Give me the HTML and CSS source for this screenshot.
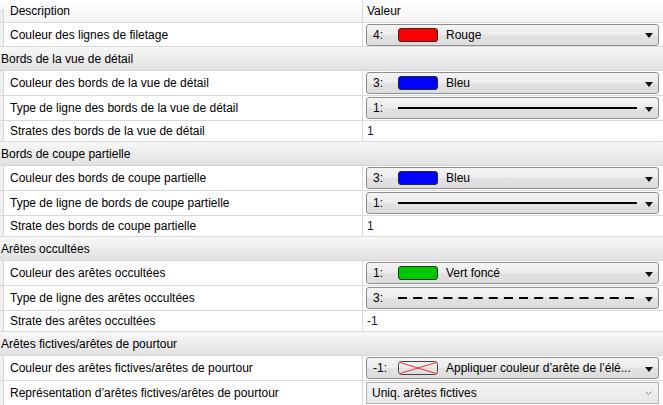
FILE: index.html
```html
<!DOCTYPE html>
<html lang="fr">
<head>
<meta charset="utf-8">
<title>Propriétés</title>
<link rel="stylesheet" href="styles.css">
</head>
<body>
<div class="grid">
  <div class="row hdr"><div class="gut"></div><div class="c1">Description</div><div class="c2 hv">Valeur</div></div>

  <div class="row first"><div class="gut"></div><div class="c1">Couleur des lignes de filetage</div>
    <div class="c2"><div class="combo"><span class="num">4:</span><span class="sw red"></span><span class="lbl">Rouge</span><span class="arr"></span></div></div></div>

  <div class="group">Bords de la vue de détail</div>
  <div class="row d"><div class="gut"></div><div class="c1">Couleur des bords de la vue de détail</div>
    <div class="c2"><div class="combo"><span class="num">3:</span><span class="sw blue"></span><span class="lbl">Bleu</span><span class="arr"></span></div></div></div>
  <div class="row d"><div class="gut"></div><div class="c1">Type de ligne des bords de la vue de détail</div>
    <div class="c2"><div class="combo"><span class="num">1:</span><span class="line solid"></span><span class="arr"></span></div></div></div>
  <div class="row t"><div class="gut"></div><div class="c1">Strates des bords de la vue de détail</div><div class="c2 tv">1</div></div>

  <div class="group">Bords de coupe partielle</div>
  <div class="row d"><div class="gut"></div><div class="c1">Couleur des bords de coupe partielle</div>
    <div class="c2"><div class="combo"><span class="num">3:</span><span class="sw blue"></span><span class="lbl">Bleu</span><span class="arr"></span></div></div></div>
  <div class="row d"><div class="gut"></div><div class="c1">Type de ligne de bords de coupe partielle</div>
    <div class="c2"><div class="combo"><span class="num">1:</span><span class="line solid"></span><span class="arr"></span></div></div></div>
  <div class="row t"><div class="gut"></div><div class="c1">Strate des bords de coupe partielle</div><div class="c2 tv">1</div></div>

  <div class="group">Arêtes occultées</div>
  <div class="row d"><div class="gut"></div><div class="c1">Couleur des arêtes occultées</div>
    <div class="c2"><div class="combo"><span class="num">1:</span><span class="sw green"></span><span class="lbl">Vert foncé</span><span class="arr"></span></div></div></div>
  <div class="row d"><div class="gut"></div><div class="c1">Type de ligne des arêtes occultées</div>
    <div class="c2"><div class="combo"><span class="num">3:</span>
      <svg class="dash" width="236" height="4" viewBox="0 0 236 4"><line x1="0" y1="2" x2="236" y2="2" stroke="#000" stroke-width="2" stroke-dasharray="9 6.13"/></svg>
      <span class="arr"></span></div></div></div>
  <div class="row t"><div class="gut"></div><div class="c1">Strate des arêtes occultées</div><div class="c2 tv">-1</div></div>

  <div class="group">Arêtes fictives/arêtes de pourtour</div>
  <div class="row d"><div class="gut"></div><div class="c1">Couleur des arêtes fictives/arêtes de pourtour</div>
    <div class="c2"><div class="combo"><span class="num">-1:</span>
      <svg class="swx" width="40" height="14" viewBox="0 0 40 14"><rect x="0.5" y="0.5" width="39" height="13" rx="3" fill="none" stroke="#444"/><line x1="2" y1="1.5" x2="38" y2="12.5" stroke="#e33" stroke-width="1"/><line x1="2" y1="12.5" x2="38" y2="1.5" stroke="#e33" stroke-width="1"/></svg>
      <span class="lbl">Appliquer couleur d’arête de l’élé...</span><span class="arr"></span></div></div></div>
  <div class="row d"><div class="gut"></div><div class="c1">Représentation d’arêtes fictives/arêtes de pourtour</div>
    <div class="c2"><div class="combo flat"><span class="lbl2">Uniq. arêtes fictives</span>
      <svg class="chev" width="7" height="4" viewBox="0 0 7 4"><polyline points="0.5,0.5 3.5,3.5 6.5,0.5" fill="none" stroke="#8a8a8a" stroke-width="1"/></svg></div></div></div>
</div>
</body>
</html>
```
FILE: styles.css
```css
html, body {
  margin: 0;
  padding: 0;
  background: #ffffff;
  overflow: hidden;
}
body {
  width: 663px;
  height: 405px;
  font-family: "Liberation Sans", Arial, sans-serif;
  font-size: 12px;
  color: #000;
}
.grid {
  display: flex;
  flex-direction: column;
}
.row {
  display: grid;
  grid-template-columns: 4px 359px 1fr;
  box-sizing: border-box;
  border-bottom: 1px solid #d9d9d9;
  background: #fff;
}
.row.hdr { height: 23px; background: linear-gradient(#ffffff, #f3f3f3); }
.row.first { height: 24px; }
.row.d { height: 25px; }
.row.t { height: 21px; }
.gut {
  background: #f0f0f0;
  border-right: 1px solid #d9d9d9;
}
.hdr .gut { margin-top: 9px; background: #ececec; }
.c1 {
  display: flex;
  align-items: center;
  padding-left: 6px;
  border-right: 1px solid #d9d9d9;
  white-space: nowrap;
  overflow: hidden;
}
.c2 {
  display: flex;
  align-items: center;
  min-width: 0;
}
.hv { padding-left: 4px; }
.tv { padding-left: 4px; color: #1a1030; }
.group {
  box-sizing: border-box;
  height: 24px;
  display: flex;
  align-items: center;
  padding-left: 1px;
  background: linear-gradient(#f8f8f8, #e1e1e1);
  border-bottom: 1px solid #d6d6d6;
}
.combo {
  box-sizing: border-box;
  height: 22px;
  margin: 0 4px 0 3px;
  flex: 1;
  display: flex;
  align-items: center;
  border: 1px solid #8f8f8f;
  border-radius: 3px;
  background: linear-gradient(#f4f4f4 0%, #ececec 50%, #e2e2e2 51%, #dcdcdc 100%);
  padding-left: 6px;
  padding-right: 5px;
}
.num {
  width: 25px;
  flex: none;
}
.sw {
  width: 40px;
  height: 14px;
  box-sizing: border-box;
  border: 1px solid #2a2a2a;
  border-radius: 3px;
  flex: none;
}
.swx { flex: none; display: block; }
.red { background: #ff0000; }
.blue { background: #0000ff; }
.green { background: #00c800; }
.lbl {
  margin-left: 8px;
  white-space: nowrap;
}
.line.solid {
  flex: none;
  width: 239px;
  height: 2px;
  background: #000;
}
.dash { flex: none; display: block; }
.arr {
  margin-left: auto;
  width: 0;
  height: 0;
  border-left: 4px solid transparent;
  border-right: 4px solid transparent;
  border-top: 5px solid #111;
  margin-top: 2px;
}
.combo.flat {
  border-radius: 0;
  border-color: #b4b4b4;
  background: linear-gradient(#f3f3f3, #e8e8e8);
  padding-left: 5px;
  padding-right: 6px;
  justify-content: space-between;
}
.chev { display: block; }
```
